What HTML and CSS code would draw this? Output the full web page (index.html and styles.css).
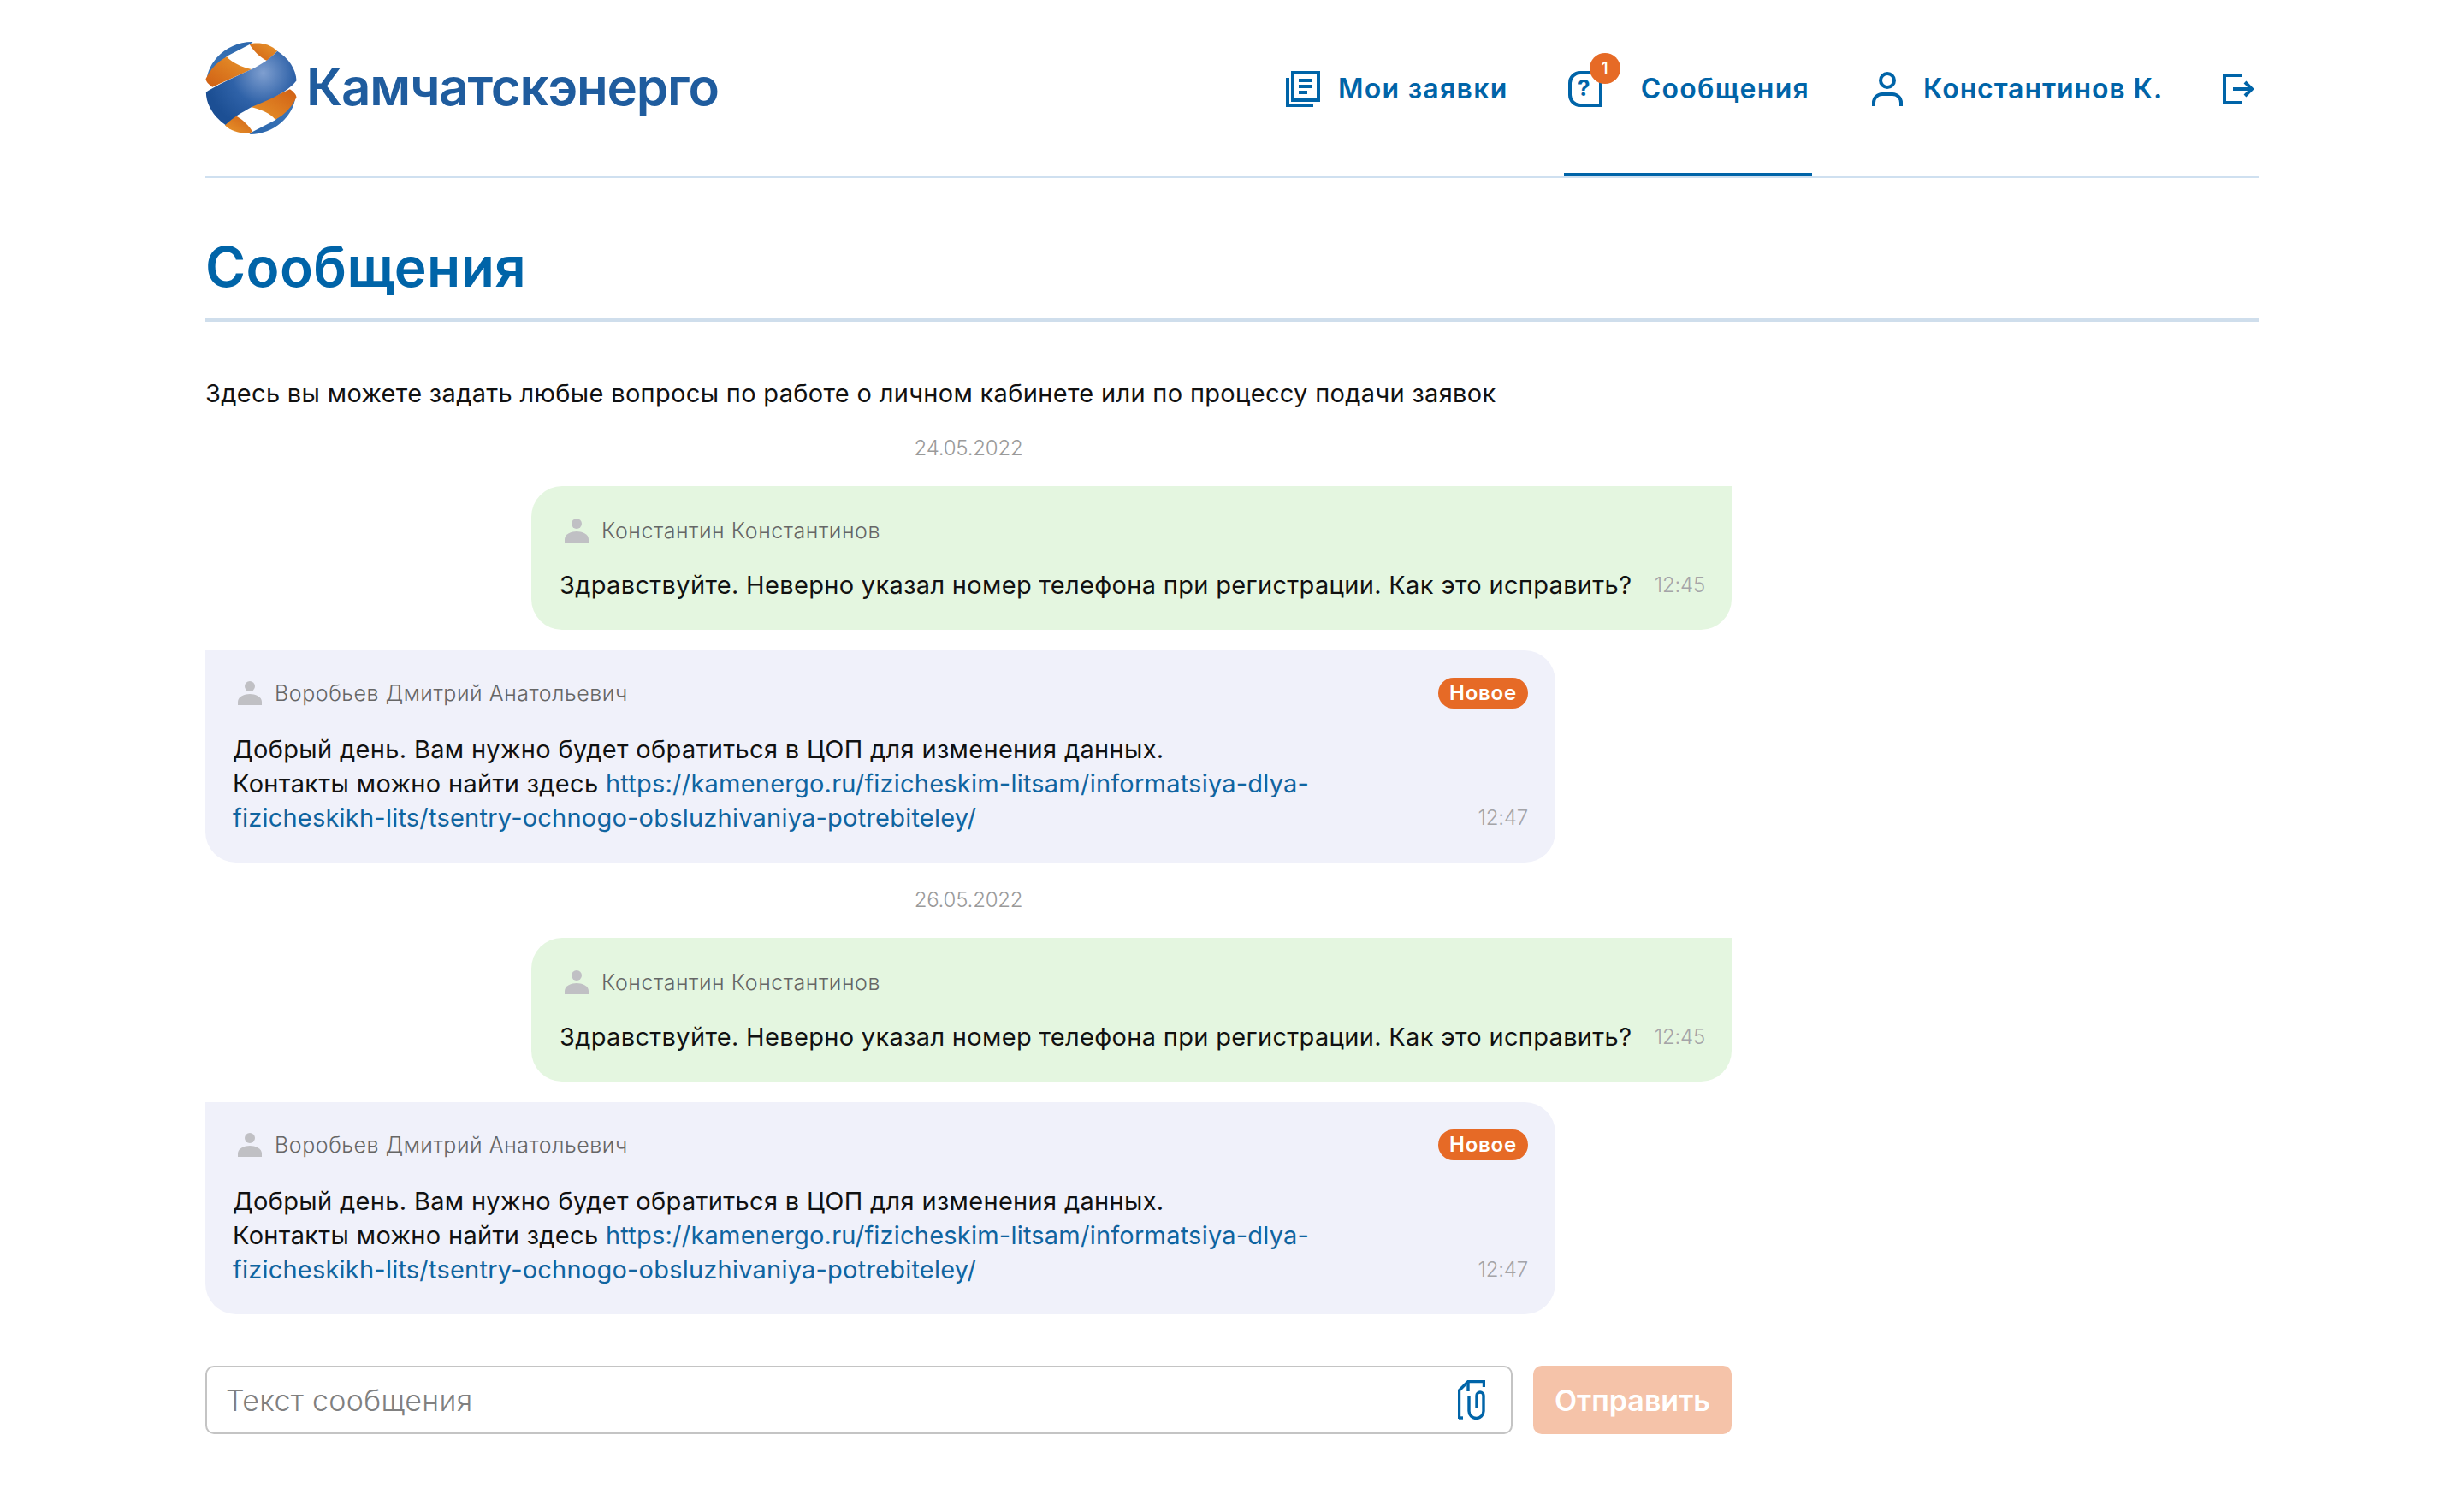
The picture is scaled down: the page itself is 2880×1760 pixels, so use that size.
FILE: index.html
```html
<!DOCTYPE html>
<html lang="ru">
<head>
  <meta charset="utf-8">
  <title>Сообщения</title>
  <link rel="stylesheet" href="styles.css">
</head>
<body>
  <div class="page">
    <!-- Header -->
    <header class="header">
      <a class="logo" href="#">
        <svg class="logo-mark" viewBox="60 53 320 330" width="107" height="110">
          <defs>
            <radialGradient id="bandFill" gradientUnits="userSpaceOnUse" cx="262" cy="165" r="200">
              <stop offset="0" stop-color="#7f9fd0"/>
              <stop offset="0.55" stop-color="#2f62a8"/>
              <stop offset="1" stop-color="#1c4f94"/>
            </radialGradient>
            <linearGradient id="orangeFill" x1="0" y1="1" x2="1" y2="0">
              <stop offset="0" stop-color="#d05f14"/>
              <stop offset="1" stop-color="#e8962c"/>
            </linearGradient>
            <linearGradient id="sliverFill" x1="0" y1="1" x2="1" y2="0">
              <stop offset="0" stop-color="#3f78ba"/>
              <stop offset="1" stop-color="#2a66ac"/>
            </linearGradient>
            <g id="logoHalf">
              <path d="M64 190C70 120 140 55 226 56L215 65L135 106Z" fill="url(#sliverFill)"/>
              <path d="M135 108C150 128 190 146 222 152L84 214C72 206 62 196 61 186C78 150 104 124 135 108Z" fill="url(#orangeFill)"/>
              <path d="M214 64C240 56 285 60 312 88L276 122C250 110 226 84 214 64Z" fill="url(#orangeFill)"/>
            </g>
          </defs>
          <use href="#logoHalf"/>
          <use href="#logoHalf" transform="rotate(180 220 218)"/>
          <path d="M312 88C350 112 378 150 379 192C355 226 290 258 222 284C190 302 155 322 130 347C92 320 62 278 62 232C90 212 160 180 222 152C258 134 290 112 312 88Z" fill="url(#bandFill)"/>
        </svg>
        <span class="logo-text">Камчатскэнерго</span>
      </a>
      <nav class="nav">
        <a class="nav-item nav-orders" href="#">
          <svg class="nav-icon" width="40" height="42" viewBox="0 0 40 42" fill="none" stroke="currentColor" stroke-width="4">
            <path d="M8 2H38V34H8Z"/>
            <path d="M2 8V40H32"/>
            <path d="M15 11H31M15 18H31M15 25H25"/>
          </svg>
          <span>Мои заявки</span>
        </a>
        <a class="nav-item nav-item-active" href="#">
          <span class="nav-icon-wrap">
            <svg class="nav-icon" width="40" height="42" viewBox="0 0 40 42" fill="none" stroke="currentColor" stroke-width="4">
              <path d="M38 40H14A12 12 0 0 1 2 28V14A12 12 0 0 1 14 2H26A12 12 0 0 1 38 14Z"/>
              <text class="nav-icon-mark" x="19" y="29" text-anchor="middle">?</text>
            </svg>
            <span class="nav-badge">1</span>
          </span>
          <span>Сообщения</span>
        </a>
        <a class="nav-item nav-user" href="#">
          <svg class="nav-icon" width="36" height="40" viewBox="0 0 36 40" fill="none" stroke="currentColor" stroke-width="4">
            <circle cx="18" cy="10" r="8"/>
            <path d="M2 40V36A10 10 0 0 1 12 26H24A10 10 0 0 1 34 36V40"/>
          </svg>
          <span>Константинов К.</span>
        </a>
        <a class="nav-exit" href="#">
          <svg width="37" height="36" viewBox="0 0 37 36" fill="none" stroke="currentColor" stroke-width="4">
            <path d="M22 2H2V34H22"/>
            <path d="M12 18H34M26 10L34 18L26 26"/>
          </svg>
        </a>
      </nav>
    </header>

    <h1 class="page-title">Сообщения</h1>
    <p class="intro">Здесь вы можете задать любые вопросы по работе о личном кабинете или по процессу подачи заявок</p>

    <!-- Chat -->
    <div class="chat">
      <div class="chat-date">24.05.2022</div>
      <div class="msg msg-out">
        <div class="msg-head">
          <svg class="msg-avatar" width="28" height="28" viewBox="0 0 28 28"><circle cx="14" cy="6" r="6"/><path d="M0 28V24C0 18 8 15 14 15S28 18 28 24V28Z"/></svg>
          <span class="msg-author">Константин Константинов</span>
        </div>
        <div class="msg-body">
          <div class="msg-text">Здравствуйте. Неверно указал номер телефона при регистрации. Как это исправить?</div>
          <span class="msg-time">12:45</span>
        </div>
      </div>
      <div class="msg msg-in">
        <div class="msg-head">
          <svg class="msg-avatar" width="28" height="28" viewBox="0 0 28 28"><circle cx="14" cy="6" r="6"/><path d="M0 28V24C0 18 8 15 14 15S28 18 28 24V28Z"/></svg>
          <span class="msg-author">Воробьев Дмитрий Анатольевич</span>
          <span class="msg-new">Новое</span>
        </div>
        <div class="msg-body">
          <div class="msg-text">Добрый день. Вам нужно будет обратиться в ЦОП для изменения данных.<br>Контакты можно найти здесь <a href="#">https://kamenergo.ru/fizicheskim-litsam/informatsiya-dlya-</a><br><a href="#">fizicheskikh-lits/tsentry-ochnogo-obsluzhivaniya-potrebiteley/</a></div>
          <span class="msg-time">12:47</span>
        </div>
      </div>

      <div class="chat-date">26.05.2022</div>
      <div class="msg msg-out">
        <div class="msg-head">
          <svg class="msg-avatar" width="28" height="28" viewBox="0 0 28 28"><circle cx="14" cy="6" r="6"/><path d="M0 28V24C0 18 8 15 14 15S28 18 28 24V28Z"/></svg>
          <span class="msg-author">Константин Константинов</span>
        </div>
        <div class="msg-body">
          <div class="msg-text">Здравствуйте. Неверно указал номер телефона при регистрации. Как это исправить?</div>
          <span class="msg-time">12:45</span>
        </div>
      </div>
      <div class="msg msg-in">
        <div class="msg-head">
          <svg class="msg-avatar" width="28" height="28" viewBox="0 0 28 28"><circle cx="14" cy="6" r="6"/><path d="M0 28V24C0 18 8 15 14 15S28 18 28 24V28Z"/></svg>
          <span class="msg-author">Воробьев Дмитрий Анатольевич</span>
          <span class="msg-new">Новое</span>
        </div>
        <div class="msg-body">
          <div class="msg-text">Добрый день. Вам нужно будет обратиться в ЦОП для изменения данных.<br>Контакты можно найти здесь <a href="#">https://kamenergo.ru/fizicheskim-litsam/informatsiya-dlya-</a><br><a href="#">fizicheskikh-lits/tsentry-ochnogo-obsluzhivaniya-potrebiteley/</a></div>
          <span class="msg-time">12:47</span>
        </div>
      </div>

      <!-- Send form -->
      <form class="send-form">
        <div class="send-field">
          <input class="send-input" type="text" placeholder="Текст сообщения">
          <svg class="send-clip" width="32" height="46" viewBox="0 0 32 46" fill="none" stroke="#0064a8" stroke-width="3.4">
            <path d="M1.5 45V12L12 1.5H30.5V8"/>
            <path d="M12 1.5V13"/>
            <path d="M1 44H6"/>
            <path d="M22 33V18A4 4 0 0 1 30 18V36A8.5 8.5 0 0 1 13 36V18"/>
          </svg>
        </div>
        <button class="send-btn" type="button">Отправить</button>
      </form>
    </div>
  </div>
</body>
</html>
```

FILE: styles.css
```css
* {
  margin: 0;
  padding: 0;
  box-sizing: border-box;
}

body {
  font-family: Inter, "Noto Sans", sans-serif;
  font-size: 29px;
  letter-spacing: 0.32px;
  line-height: 40px;
  color: #111;
  background: #fff;
}

a {
  color: inherit;
  text-decoration: none;
}

.page {
  width: 2400px;
  margin: 0 auto;
}

.header {
  display: flex;
  justify-content: space-between;
  height: 208px;
  border-bottom: 2px solid #cfe0f0;
}

.logo {
  display: flex;
  align-items: center;
  gap: 11px;
  height: 206px;
}

.logo-text {
  position: relative;
  top: -2px;
  font-size: 60px;
  font-weight: 600;
  letter-spacing: -1.2px;
  color: #1f5c9e;
}

.nav {
  display: flex;
  color: #0064a8;
  font-size: 32px;
  font-weight: 600;
  letter-spacing: 1.3px;
}

.nav-item {
  display: flex;
  align-items: center;
  gap: 21px;
  height: 206px;
  padding-top: 2px;
  margin-right: 70px;
}

.nav-orders {
  margin-right: 65px;
}

.nav-item-active {
  gap: 45px;
  padding: 6px 3px 0 5px;
  border-bottom: 4px solid #0064a8;
}

.nav-icon-wrap {
  position: relative;
  display: flex;
}

.nav-icon-mark {
  font-size: 26px;
  font-weight: 700;
  fill: currentColor;
  stroke: none;
}

.nav-badge {
  position: absolute;
  top: -21px;
  right: -21px;
  width: 36px;
  height: 36px;
  border-radius: 50%;
  background: #e66a26;
  color: #fff;
  font-size: 20px;
  font-weight: 500;
  letter-spacing: 0;
  line-height: 36px;
  text-align: center;
}

.nav-user {
  gap: 24px;
  letter-spacing: 0.9px;
}

.nav-exit {
  display: flex;
  align-items: center;
  height: 206px;
  padding-top: 2px;
  margin-right: 5px;
}

.page-title {
  font-size: 64px;
  font-weight: 600;
  letter-spacing: 0.4px;
  line-height: 76px;
  color: #0064a8;
  padding: 66px 0 22px;
  border-bottom: 4px solid #cfdeec;
}

.intro {
  margin-top: 64px;
}

.chat {
  display: flex;
  flex-direction: column;
  width: 1784px;
}

.chat-date {
  height: 34px;
  margin: 26px 0 28px;
  font-size: 24px;
  font-weight: 300;
  letter-spacing: -0.2px;
  line-height: 36px;
  text-align: center;
  color: #9a9a9a;
}

.msg {
  padding: 32px;
  border-radius: 36px;
}

.msg-out {
  align-self: flex-end;
  width: 1403px;
  padding: 34px 31px 32px 33px;
  background: #e4f6e0;
  border-top-right-radius: 0;
  margin-bottom: 24px;
}

.msg-in {
  width: 1578px;
  background: #f0f1fa;
  border-top-left-radius: 0;
}

.msg-head {
  display: flex;
  align-items: center;
  height: 36px;
  margin-bottom: 26px;
}

.msg-in .msg-head {
  margin-bottom: 28px;
}

.msg-avatar {
  margin-left: 6px;
  margin-right: 15px;
  fill: #c0c0c4;
}

.msg-author {
  font-size: 25px;
  font-weight: 300;
  letter-spacing: 0.55px;
  color: #666;
}

.msg-new {
  margin-left: auto;
  height: 36px;
  padding: 0 13px;
  border-radius: 18px;
  background: #e66a26;
  color: #fff;
  font-size: 24px;
  font-weight: 600;
  letter-spacing: 0.8px;
  line-height: 35px;
}

.msg-body {
  display: flex;
  justify-content: space-between;
  align-items: flex-end;
}

.msg-text a {
  color: #0f64a0;
  letter-spacing: 0.22px;
}

.msg-time {
  font-size: 24px;
  font-weight: 300;
  letter-spacing: -0.2px;
  color: #a4a4a8;
}

.send-form {
  display: flex;
  gap: 24px;
  margin-top: 60px;
}

.send-field {
  display: flex;
  align-items: center;
  flex: 1;
  height: 80px;
  padding: 0 30px 0 22px;
  border: 2px solid #c4c4c4;
  border-radius: 10px;
}

.send-input {
  flex: 1;
  border: 0;
  outline: 0;
  background: none;
  font-family: inherit;
  font-size: 34px;
  letter-spacing: 0.3px;
}

.send-input::placeholder {
  color: #808080;
  opacity: 1;
  font-weight: 300;
}

.send-btn {
  width: 232px;
  height: 80px;
  border: 0;
  border-radius: 10px;
  background: #f5c3a9;
  color: #fff;
  font-family: inherit;
  font-size: 34px;
  font-weight: 600;
}
```
